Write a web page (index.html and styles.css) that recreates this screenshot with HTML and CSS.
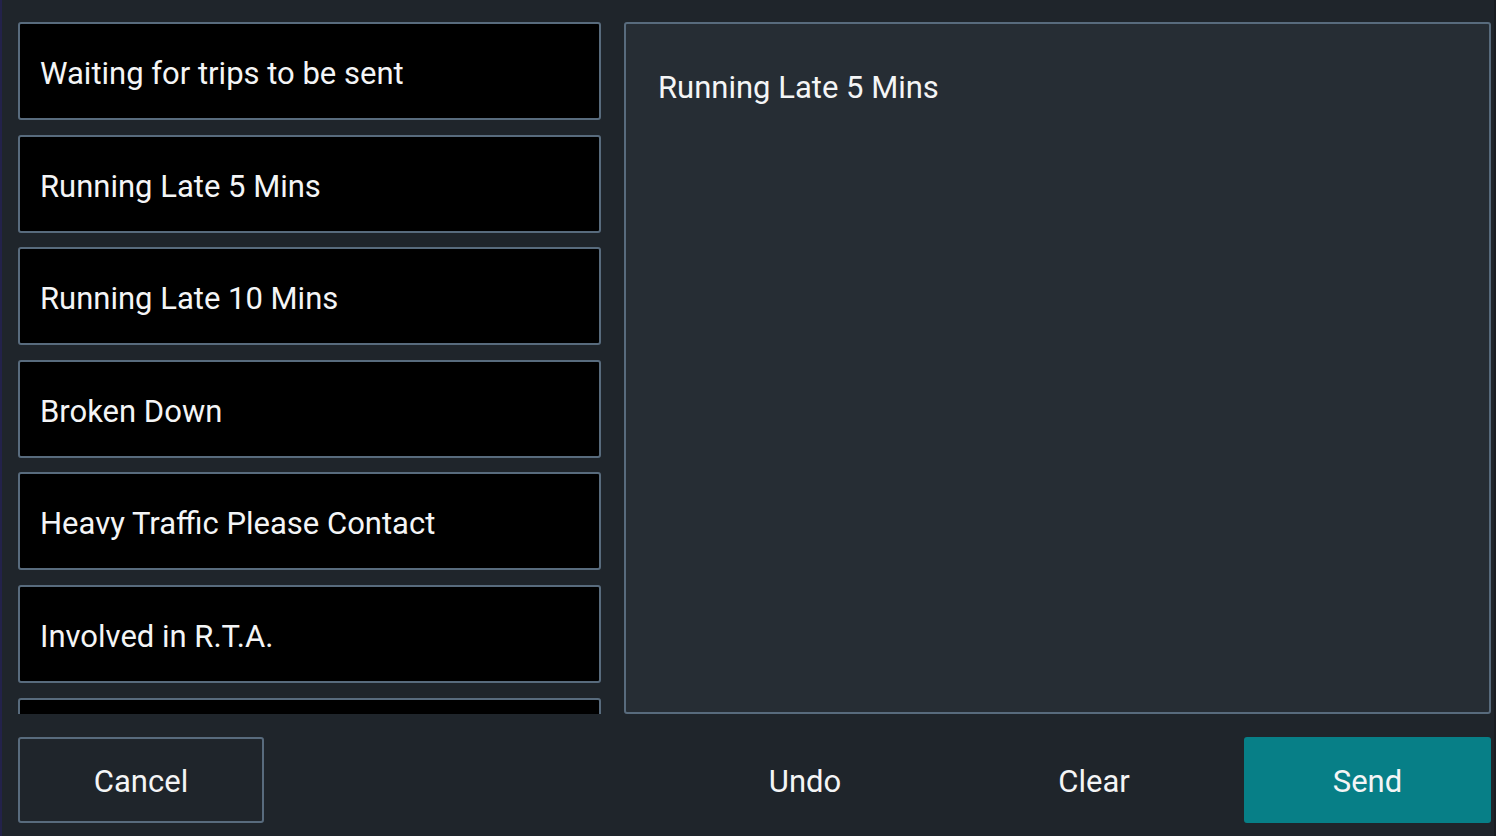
FILE: index.html
```html
<!DOCTYPE html>
<html lang="en">
<head>
<meta charset="utf-8">
<title>Messages</title>
<link rel="stylesheet" href="styles.css">
</head>
<body>
<div class="screen">
  <div class="main">
    <div class="list">
      <div class="item">Waiting for trips to be sent</div>
      <div class="item selected">Running Late 5 Mins</div>
      <div class="item">Running Late 10 Mins</div>
      <div class="item">Broken Down</div>
      <div class="item">Heavy Traffic Please Contact</div>
      <div class="item">Involved in R.T.A.</div>
      <div class="item"></div>
    </div>
    <div class="panel">Running Late 5 Mins</div>
  </div>
  <div class="actions">
    <button class="btn btn-outline">Cancel</button>
    <button class="btn btn-flat btn-undo">Undo</button>
    <button class="btn btn-flat btn-clear">Clear</button>
    <button class="btn btn-primary">Send</button>
  </div>
</div>
</body>
</html>
```
FILE: styles.css
```css
* { box-sizing: border-box; }
html, body {
  margin: 0;
  padding: 0;
  width: 1496px;
  height: 836px;
  overflow: hidden;
  background: #1f252b;
}
body {
  font-family: Roboto, "Noto Sans", sans-serif;
  color: #f4f5f6;
}
.screen {
  width: 1496px;
  height: 836px;
  border-left: 2px solid #23224a;
  border-right: 2px solid #191d22;
  padding: 22px 3px 13px 16px;
  display: flex;
  flex-direction: column;
}
.main {
  display: flex;
  gap: 23px;
  height: 692px;
}
.list {
  width: 583px;
  height: 692px;
  overflow: hidden;
  display: flex;
  flex-direction: column;
  gap: 14.6px;
  flex: none;
}
.item {
  flex: none;
  height: 98px;
  background: #000;
  border: 2px solid #586b7d;
  border-radius: 3px;
  padding: 5px 0 0 20px;
  display: flex;
  align-items: center;
  font-size: 31px;
}
.panel {
  flex: 1;
  background: #262d34;
  border: 2px solid #586b7d;
  border-radius: 3px;
  padding: 46px 32px;
  font-size: 31px;
  line-height: 1.17;
}
.actions {
  margin-top: 23px;
  height: 86px;
  display: flex;
}
.btn {
  font-family: inherit;
  font-size: 31px;
  color: #f4f5f6;
  height: 86px;
  width: 246px;
  border-radius: 3px;
  border: 2px solid transparent;
  background: transparent;
  padding: 3px 0 0 0;
  flex: none;
}
.btn-outline {
  border-color: #586b7d;
}
.btn-undo { margin-left: 418px; }
.btn-clear { margin-left: 43px; }
.btn-primary {
  margin-left: 27px;
  width: 247px;
  background: #077f87;
  border-color: #077f87;
}
```
